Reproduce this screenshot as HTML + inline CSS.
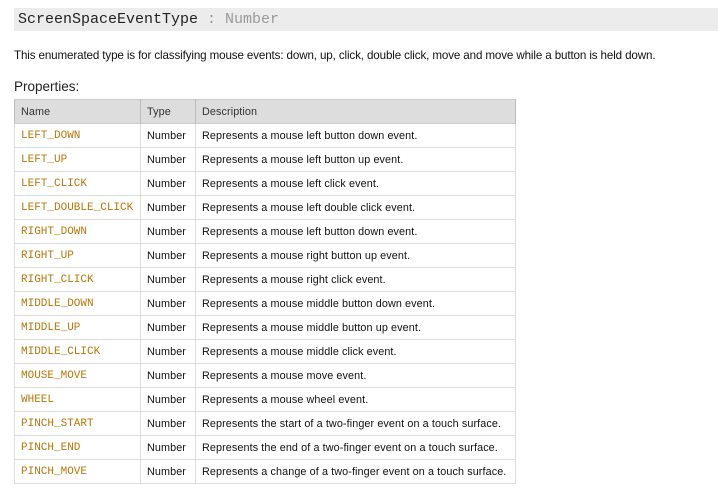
<!DOCTYPE html>
<html><head><meta charset="utf-8"><style>
body{margin:0;background:#fff;font-family:"Liberation Sans",sans-serif;color:#000;}
.hdr{position:absolute;left:14px;top:8px;width:704px;height:23px;background:#ececec;}
.hdr span{position:absolute;left:4px;top:2px;font:15px/19px "Liberation Mono",monospace;color:#222;white-space:pre}
.hdr .g{color:#999}
.desc{position:absolute;left:14px;top:49px;font-size:11.6px;letter-spacing:-0.12px;color:#111;white-space:nowrap}
.props{position:absolute;left:14px;top:79px;font-size:13.5px;color:#222}
table{position:absolute;left:14px;top:99px;border-collapse:collapse;font-size:10.8px;letter-spacing:0.1px}
td,th{border:1px solid #ddd;height:23px;padding:0 6px;text-align:left;white-space:nowrap;color:#111}
th{background:#dddddd;font-weight:normal;color:#333;border-color:#ccc #bbb}
td.n{font:11px "Liberation Mono",monospace;color:#b8760a;letter-spacing:0}
</style></head><body>
<div class="hdr"><span>ScreenSpaceEventType <span class="g" style="position:static">: Number</span></span></div>
<div class="desc">This enumerated type is for classifying mouse events: down, up, click, double click, move and move while a button is held down.</div>
<div class="props">Properties:</div>
<table>
<tr><th style="width:113px">Name</th><th style="width:42px">Type</th><th style="width:307px">Description</th></tr>
<tr><td class="n">LEFT_DOWN</td><td>Number</td><td>Represents a mouse left button down event.</td></tr>
<tr><td class="n">LEFT_UP</td><td>Number</td><td>Represents a mouse left button up event.</td></tr>
<tr><td class="n">LEFT_CLICK</td><td>Number</td><td>Represents a mouse left click event.</td></tr>
<tr><td class="n">LEFT_DOUBLE_CLICK</td><td>Number</td><td>Represents a mouse left double click event.</td></tr>
<tr><td class="n">RIGHT_DOWN</td><td>Number</td><td>Represents a mouse left button down event.</td></tr>
<tr><td class="n">RIGHT_UP</td><td>Number</td><td>Represents a mouse right button up event.</td></tr>
<tr><td class="n">RIGHT_CLICK</td><td>Number</td><td>Represents a mouse right click event.</td></tr>
<tr><td class="n">MIDDLE_DOWN</td><td>Number</td><td>Represents a mouse middle button down event.</td></tr>
<tr><td class="n">MIDDLE_UP</td><td>Number</td><td>Represents a mouse middle button up event.</td></tr>
<tr><td class="n">MIDDLE_CLICK</td><td>Number</td><td>Represents a mouse middle click event.</td></tr>
<tr><td class="n">MOUSE_MOVE</td><td>Number</td><td>Represents a mouse move event.</td></tr>
<tr><td class="n">WHEEL</td><td>Number</td><td>Represents a mouse wheel event.</td></tr>
<tr><td class="n">PINCH_START</td><td>Number</td><td>Represents the start of a two-finger event on a touch surface.</td></tr>
<tr><td class="n">PINCH_END</td><td>Number</td><td>Represents the end of a two-finger event on a touch surface.</td></tr>
<tr><td class="n">PINCH_MOVE</td><td>Number</td><td>Represents a change of a two-finger event on a touch surface.</td></tr>
</table>
</body></html>
